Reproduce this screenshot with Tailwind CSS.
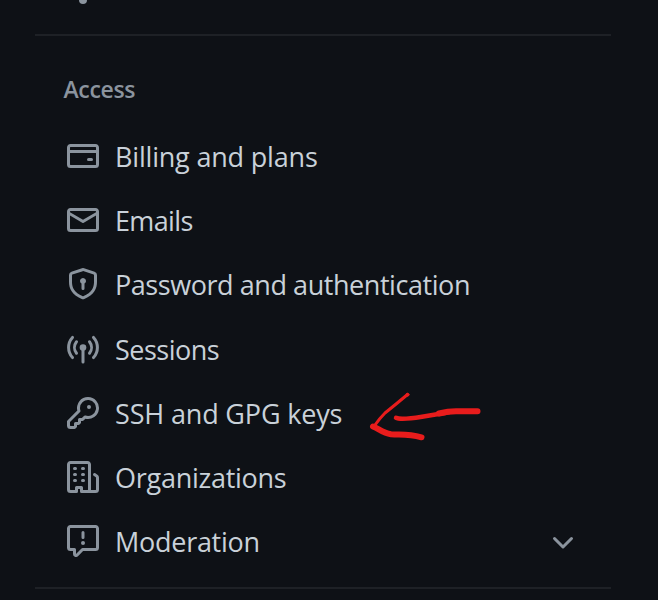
<!DOCTYPE html>
<html lang="en">
<head>
<meta charset="utf-8">
<title>Settings</title>
<script src="https://cdn.jsdelivr.net/npm/@tailwindcss/browser@4"></script>
</head>
<body class="bg-[#0e1116] overflow-hidden">
<aside class="relative w-[658px] h-[600px] overflow-hidden pl-[35px] pr-[47px] text-[#c9d1d9] font-['Open_Sans','Noto_Sans',sans-serif]">
  <div class="h-[34px] pl-[44px]"><svg class="block w-2 h-1 fill-[#8b949e] overflow-visible" viewBox="0 0 8 4"><circle cx="4" cy="0" r="4"/></svg></div>
  <div class="h-[2px] bg-[#1e2126]"></div>
  <h2 class="h-[88px] pl-[28.5px] pt-[37px] text-[23px] leading-[32px] font-semibold text-[#8b949e] tracking-[-0.35px]">Access</h2>
  <nav class="flex flex-col pl-8 pr-[35px] text-[27px] leading-[38px] whitespace-nowrap [&>a]:flex [&>a]:h-[64.17px] [&>a]:items-center [&>a]:gap-4 [&_span]:pt-[2px] [&_svg]:block [&_svg]:size-8 [&_svg]:shrink-0 [&_svg]:fill-[#8b949e]">
    <a><svg viewBox="0 0 16 16"><path d="M10.75 9a.75.75 0 0 0 0 1.5h1.5a.75.75 0 0 0 0-1.5h-1.5Z"/><path d="M0 3.75C0 2.784.784 2 1.75 2h12.5c.966 0 1.75.784 1.75 1.75v8.5A1.75 1.75 0 0 1 14.25 14H1.75A1.75 1.75 0 0 1 0 12.25ZM14.500 6.500h-13v5.750c0 .138.112.25.25.25h12.500a.25.25 0 0 0 .25-.25Zm0-2.750a.25.25 0 0 0-.25-.25H1.750a.25.25 0 0 0-.25.25V5h13Z"/></svg><span class="tracking-[-0.19px]">Billing and plans</span></a>
    <a><svg viewBox="0 0 16 16"><path d="M1.75 2h12.5c.966 0 1.75.784 1.75 1.75v8.5A1.75 1.75 0 0 1 14.25 14H1.75A1.75 1.75 0 0 1 0 12.25v-8.5C0 2.784.784 2 1.75 2ZM1.5 12.251c0 .138.112.25.25.25h12.5a.25.25 0 0 0 .25-.25V5.809L8.38 9.397a.75.75 0 0 1-.76 0L1.5 5.809v6.442Zm13-8.181v-.32a.25.25 0 0 0-.25-.25H1.75a.25.25 0 0 0-.25.25v.32L8 7.88Z"/></svg><span class="tracking-[-0.65px]">Emails</span></a>
    <a><svg viewBox="0 0 16 16"><path d="m8.533.133 5.25 1.68A1.75 1.75 0 0 1 15 3.48V7c0 1.566-.32 3.182-1.303 4.682-.983 1.498-2.585 2.813-5.032 3.855a1.697 1.697 0 0 1-1.33 0c-2.447-1.042-4.049-2.357-5.032-3.855C1.32 10.182 1 8.566 1 7V3.48a1.755 1.755 0 0 1 1.217-1.667l5.25-1.68a1.748 1.748 0 0 1 1.066 0Zm-.61 1.429.001.001-5.25 1.68a.251.251 0 0 0-.174.237V7c0 1.36.275 2.666 1.057 3.859.784 1.194 2.121 2.342 4.366 3.298a.196.196 0 0 0 .154 0c2.245-.957 3.582-2.103 4.366-3.297C13.225 9.666 13.5 8.358 13.5 7V3.48a.25.25 0 0 0-.174-.238l-5.25-1.68a.25.25 0 0 0-.153 0ZM9.5 6.5c0 .536-.286 1.032-.75 1.3v2.45a.75.75 0 0 1-1.5 0V7.8A1.5 1.5 0 1 1 9.500 6.500Z"/></svg><span class="tracking-[-0.44px]">Password and authentication</span></a>
    <a><svg viewBox="0 0 16 16"><circle cx="8" cy="7.250" r="1.650"/><path class="fill-none stroke-[#8b949e]" stroke-width="1.5" stroke-linecap="round" d="M8 7v7.500M2.750 2.200a7.500 7.500 0 0 0 0 10.100M13.250 2.200a7.500 7.500 0 0 1 0 10.100M4.750 4.400a4.600 4.600 0 0 0 0 5.700M11.250 4.400a4.600 4.600 0 0 1 0 5.700"/></svg><span class="tracking-[-0.5px]">Sessions</span></a>
    <a><svg viewBox="0 0 16 16"><path d="M10.5 0a5.499 5.499 0 1 1-1.288 10.848l-.932.932a.749.749 0 0 1-.53.22H7v.75a.749.749 0 0 1-.22.53l-.5.5a.749.749 0 0 1-.53.22H5v.75a.749.749 0 0 1-.22.53l-.5.5a.749.749 0 0 1-.53.22h-2A1.75 1.75 0 0 1 0 14.25v-2c0-.199.079-.389.22-.53l4.932-4.932A5.5 5.5 0 0 1 10.5 0Zm-4 5.5c-.001.431.069.86.205 1.269a.75.75 0 0 1-.181.768L1.5 12.56v1.69c0 .138.112.25.25.25h1.69l.06-.06v-1.19a.75.75 0 0 1 .75-.75h1.19l.06-.06v-1.19a.75.75 0 0 1 .75-.75h1.19l1.023-1.025a.75.75 0 0 1 .768-.18A4 4 0 1 0 6.5 5.5ZM11 6a1 1 0 1 1 0-2 1 1 0 0 1 0 2Z"/></svg><span class="tracking-[-0.16px]">SSH and GPG keys</span></a>
    <a><svg viewBox="0 0 16 16"><path d="M1.75 16A1.75 1.75 0 0 1 0 14.25V1.75C0 .784.784 0 1.75 0h8.5C11.216 0 12 .784 12 1.75v12.5c0 .085-.006.168-.018.25h2.268a.25.25 0 0 0 .25-.25V8.285a.25.25 0 0 0-.111-.208l-1.055-.703a.749.749 0 1 1 .832-1.248l1.055.703c.487.325.779.871.779 1.456v5.965A1.75 1.75 0 0 1 14.25 16h-3.5a.766.766 0 0 1-.197-.026c-.099.017-.2.026-.303.026h-3a.75.75 0 0 1-.75-.75V14h-1v1.25a.75.75 0 0 1-.75.75Zm-.25-1.75c0 .138.112.25.25.25H4v-1.25a.75.75 0 0 1 .75-.75h2.5a.75.75 0 0 1 .75.75v1.25h2.25a.25.25 0 0 0 .25-.25V1.75a.25.25 0 0 0-.25-.25h-8.5a.25.25 0 0 0-.25.25Z"/><path class="fill-none stroke-[#8b949e]" stroke-width="1.5" stroke-linecap="round" d="M3.750 3.750h.5M7.750 3.750h.5M3.750 6.750h.5M7.750 6.750h.5M3.750 9.750h.5M7.750 9.750h.5"/></svg><span class="tracking-[-0.26px]">Organizations</span></a>
    <a><svg viewBox="0 0 16 16"><path d="M0 1.75C0 .784.784 0 1.75 0h12.5C15.216 0 16 .784 16 1.75v9.5A1.75 1.75 0 0 1 14.25 13H8.06l-2.573 2.573A1.458 1.458 0 0 1 3 14.543V13H1.75A1.75 1.75 0 0 1 0 11.25Zm1.75-.25a.25.25 0 0 0-.25.25v9.5c0 .138.112.25.25.25h2a.75.75 0 0 1 .75.75v2.19l2.72-2.72a.749.749 0 0 1 .53-.22h6.5a.25.25 0 0 0 .25-.25v-9.5a.25.25 0 0 0-.25-.25Zm7 2.25v2.5a.75.75 0 0 1-1.5 0v-2.5a.75.75 0 0 1 1.5 0ZM9 9a1 1 0 1 1-2 0 1 1 0 0 1 2 0Z"/></svg><span class="tracking-[-0.27px]">Moderation</span><svg class="ml-auto -mr-[3px] mt-[2px]" viewBox="0 0 16 16"><path class="fill-none stroke-[#8b949e]" stroke-width="1.5" stroke-linecap="round" stroke-linejoin="round" d="M3.750 6.250 8 10.500l4.250-4.250"/></svg></a>
  </nav>
  <div class="mt-[13.8px] h-[2px] bg-[#1e2126]"></div>
  <svg class="absolute left-[365px] top-[385px] fill-none stroke-[#e81c1c]" width="125" height="60" viewBox="365 385 125 60" stroke-linecap="round" stroke-linejoin="round">
    <path stroke-width="3" d="M407.500 394.500C401 400 390 409 385 413Q380 418 375 425"/>
    <path stroke-width="4.500" d="M396 417.800Q399 419.500 411 418.300C423 417 438 414 449 412.200"/>
    <path stroke-width="6" d="M439 413.500Q448 411.300 456 411.300L477.500 411.300M373 426.500C379 429 383 433 391 434.300C401 435 408 434 421.500 437.300"/>
    <circle class="fill-[#e81c1c]" cx="407.500" cy="394.700" r="1.500"/>
  </svg>
</aside>
</body>
</html>
